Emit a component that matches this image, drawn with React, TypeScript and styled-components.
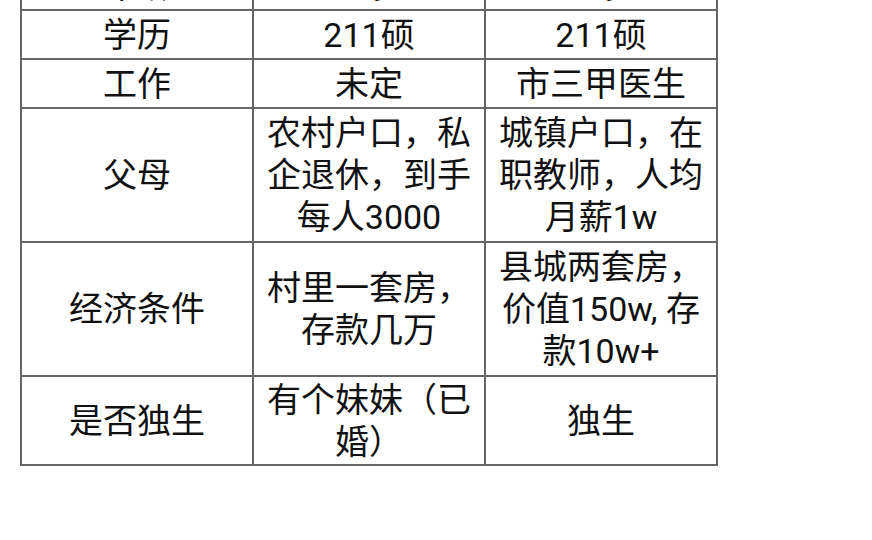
import styled, { createGlobalStyle } from "styled-components";

const GlobalStyle = createGlobalStyle`
  html, body {
    margin: 0;
    padding: 0;
    background: #ffffff;
  }
  body {
    font-family: Roboto, "Noto Sans CJK SC", sans-serif;
    overflow: hidden;
  }
`;

const Page = styled.div`
  width: 872px;
  height: 540px;
  overflow: hidden;
  background: #ffffff;
`;

// the screenshot is scrolled: the first row is mostly above the top edge
const Table = styled.div`
  display: grid;
  grid-template-columns: repeat(3, 230px);
  grid-template-rows: 47px 47px 47px 132px 132px 87px;
  gap: 2px;
  width: max-content;
  margin: -40px 0 0 20px;
  border: 2px solid #666666;
  background: #666666;
`;

const Cell = styled.div`
  display: flex;
  align-items: center;
  justify-content: center;
  padding: 0 8px;
  background: #ffffff;
  color: #111111;
  font-size: 34px;
  line-height: 42px;
  text-align: center;
  word-break: break-all;
`;

const rows: string[][] = [
  ["年龄", "28岁", "27岁"],
  ["学历", "211硕", "211硕"],
  ["工作", "未定", "市三甲医生"],
  ["父母", "农村户口，私企退休，到手每人3000", "城镇户口，在职教师，人均月薪1w"],
  ["经济条件", "村里一套房，存款几万", "县城两套房，价值150w, 存款10w+"],
  ["是否独生", "有个妹妹（已婚）", "独生"],
];

export default function App() {
  return (
    <Page>
      <GlobalStyle />
      <Table>
        {rows.map((row, i) =>
          row.map((text, j) => <Cell key={`${i}-${j}`}>{text}</Cell>)
        )}
      </Table>
    </Page>
  );
}
